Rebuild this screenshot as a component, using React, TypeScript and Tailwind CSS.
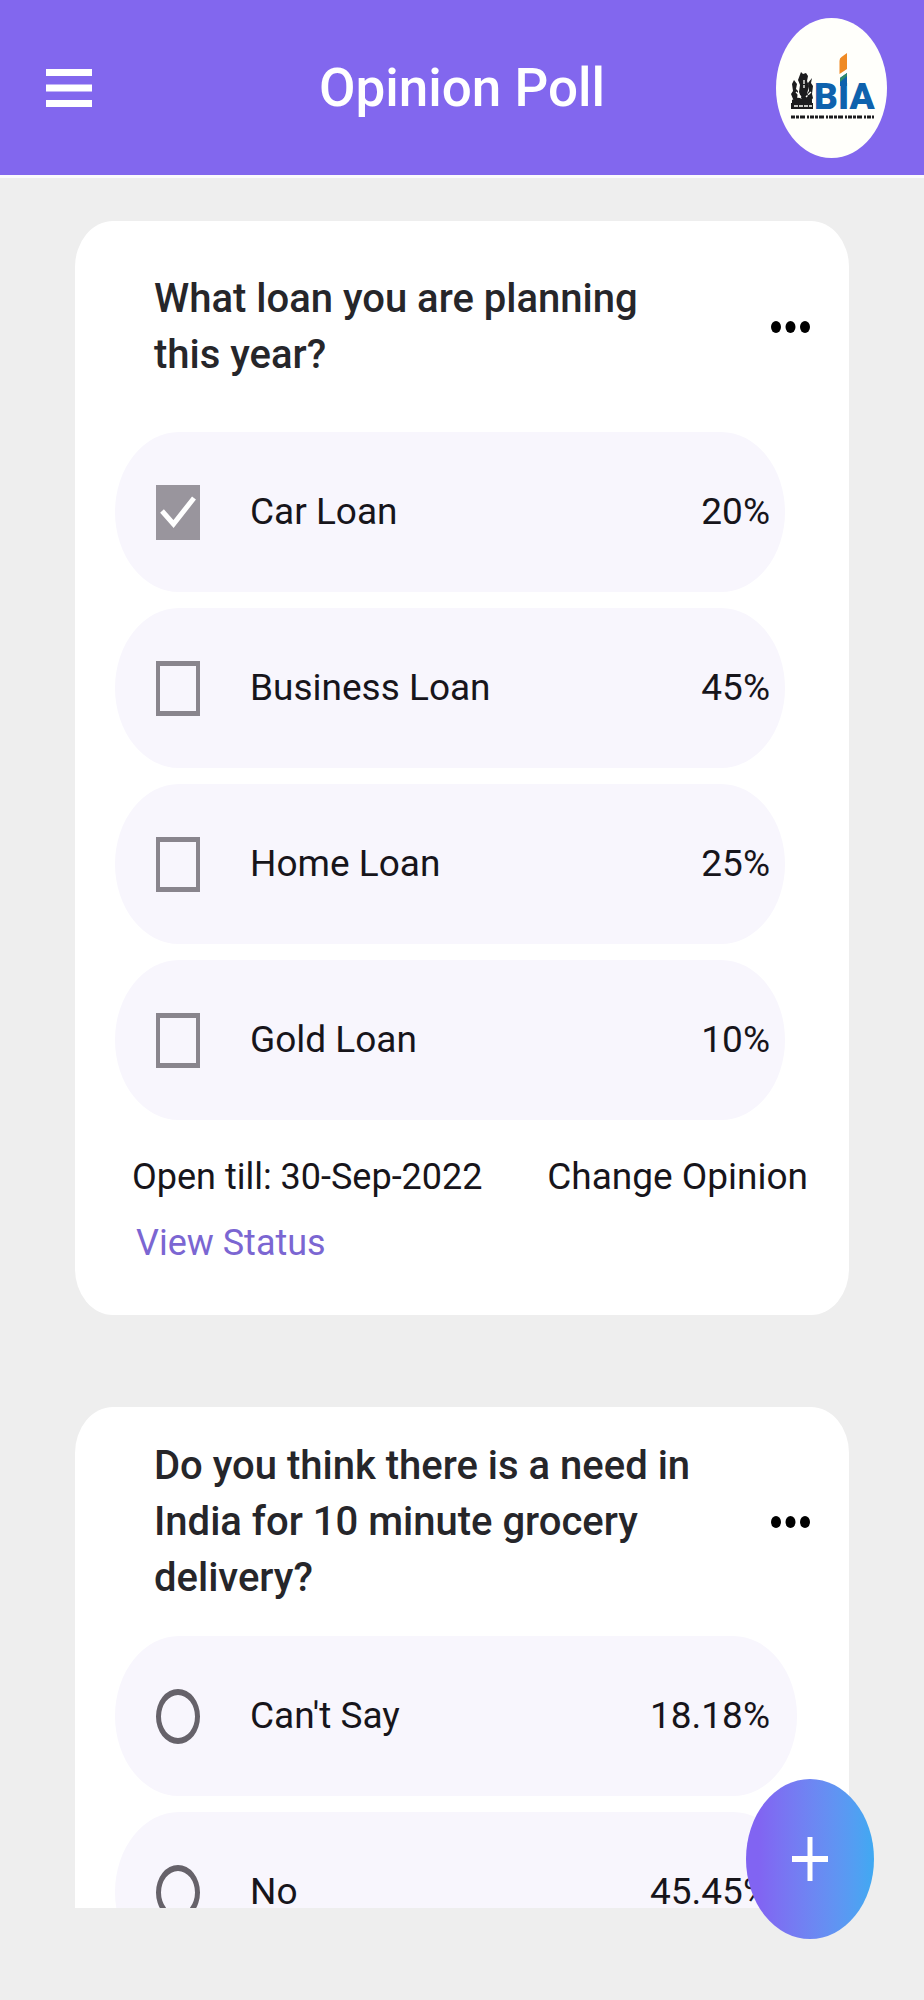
import { useState } from "react";

type PollOption = { label: string; share: string };

type Poll = {
  id: string;
  question: string;
  kind: "checkbox" | "radio";
  options: PollOption[];
};

const loanPoll: Poll = {
  id: "loan",
  question: "What loan you are planning this year?",
  kind: "checkbox",
  options: [
    { label: "Car Loan", share: "20%" },
    { label: "Business Loan", share: "45%" },
    { label: "Home Loan", share: "25%" },
    { label: "Gold Loan", share: "10%" },
  ],
};

const groceryPoll: Poll = {
  id: "grocery",
  question: "Do you think there is a need in India for 10 minute grocery delivery?",
  kind: "radio",
  options: [
    { label: "Can't Say", share: "18.18%" },
    { label: "No", share: "45.45%" },
  ],
};

function Logo() {
  return (
    <svg viewBox="0 0 111 140" className="h-[140px] w-[111px] shrink-0" role="img" aria-label="BIA">
      <ellipse cx="55.5" cy="70" rx="55.5" ry="70" fill="#fffffb" />
      <g fill="#1c1c1e">
        <path d="M15 85h22v6H15z" />
        <path d="M16 82q5-4 10-1q6-3 10 1v3H16z" />
        <path d="M18 62l3 4l-1 5l2 2l-1 8h-4l-2-5l2-3l-1-7z" />
        <path d="M25 54l2 2l3-1l2 3l-1 5l2 5l-2 8l2 6h-7l-3-8l1-7l-2-5z" />
        <path d="M36 60l-1 5l2 3l-1 8l1 4l-2 3h-3l-1-7l2-3l-1-8z" />
      </g>
      <path d="M20 74l5 5M35 74l-5 5M28 62v8M18 88h18" fill="none" stroke="#fffffb" strokeWidth="1.300" strokeDasharray="4 1" />
      <text x="38" y="91" fontFamily="Roboto, sans-serif" fontWeight="900" fontSize="37" fill="#0e62ad">
        BIA
      </text>
      <path d="M64 60l7-5v13h-7z" fill="#0e62ad" />
      <path d="M64 60l7-5v3l-7 6z" fill="#2f8a6a" />
      <path d="M63.500 56l7.500-5V35l-5.500 4q-2 1-2 4z" fill="#ef8a24" />
      <path d="M15 99h83" stroke="#1c1c1e" strokeWidth="3" strokeDasharray="4 1 3 1 5 2 2 1" />
    </svg>
  );
}

function OptionRow({ poll, option, checked, onToggle }: { poll: Poll; option: PollOption; checked: boolean; onToggle: () => void }) {
  const isBox = poll.kind === "checkbox";
  return (
    <label className="flex h-[160px] items-center rounded-[64px/80px] bg-[#f8f6fd] pr-[15px] pl-[41px]">
      <span className="grid shrink-0 place-items-center">
        <input
          type={poll.kind}
          name={poll.id}
          checked={checked}
          onChange={onToggle}
          className={
            isBox
              ? "col-start-1 row-start-1 h-[55px] w-[44px] appearance-none border-x-4 border-y-[5px] border-[#89858d] checked:border-[#99959d] checked:bg-[#99959d]"
              : "col-start-1 row-start-1 h-[55px] w-[44px] appearance-none rounded-[50%] border-x-[5px] border-y-[6px] border-[#66626a] checked:bg-[#66626a]"
          }
        />
        {isBox && checked && (
          <svg viewBox="0 0 44 55" className="pointer-events-none col-start-1 row-start-1 h-[55px] w-[44px]" aria-hidden="true">
            <path d="M6 26L17.500 39L38 13" fill="none" stroke="#fff" strokeWidth="5" />
          </svg>
        )}
      </span>
      <span className="ml-[50px] grow text-[37px] leading-[48px] text-[#17151b]">{option.label}</span>
      <span className="text-[37px] leading-[48px] text-[#17151b]">{option.share}</span>
    </label>
  );
}

function PollHeading({ question }: { question: string }) {
  return (
    <div className="flex items-center justify-between pr-[39px] pl-[79px]">
      <h2 className="max-w-[550px] text-[40px] leading-[56px] font-medium text-[#26262a]">{question}</h2>
      <button type="button" aria-label="Poll options" className="flex h-12 shrink-0 items-center">
        <svg viewBox="0 0 40 14" className="h-[14px] w-[40px]" aria-hidden="true">
          <ellipse cx="6" cy="7" rx="5" ry="6" />
          <ellipse cx="20.500" cy="7" rx="5" ry="6" />
          <ellipse cx="35" cy="7" rx="5" ry="6" />
        </svg>
      </button>
    </div>
  );
}

export default function App() {
  const [loans, setLoans] = useState<string[]>(["Car Loan"]);
  const [answer, setAnswer] = useState("");

  const toggleLoan = (label: string) =>
    setLoans((prev) => (prev.includes(label) ? prev.filter((l) => l !== label) : [...prev, label]));

  return (
    <div className="relative flex h-screen flex-col bg-[#eeeeee] pb-[92px] font-['Roboto',sans-serif]">
      <header className="grid h-[178px] shrink-0 grid-cols-[1fr_auto_1fr] items-center border-b-[3px] border-[#fbfafd] bg-[#8267ee] px-[37px]">
        <button type="button" aria-label="Open menu" className="ml-[9px] w-[46px]">
          <svg viewBox="0 0 46 40" className="h-[40px] w-[46px]" aria-hidden="true">
            <path d="M0 4.500h46M0 20h46M0 35.500h46" stroke="#fff" strokeWidth="7" />
          </svg>
        </button>
        <h1 className="text-[53px] leading-[64px] font-medium text-white">Opinion Poll</h1>
        <div className="flex justify-end">
          <Logo />
        </div>
      </header>

      <main className="flex min-h-0 grow flex-col gap-[92px] overflow-y-auto px-[75px] pt-[43px] [scrollbar-width:none]">
        <section className="shrink-0 rounded-[38px/46px] bg-white pt-[50px] pb-[46px]">
          <PollHeading question={loanPoll.question} />
          <div className="mt-[49px] mr-[64px] ml-[40px] flex flex-col gap-4">
            {loanPoll.options.map((o) => (
              <OptionRow key={o.label} poll={loanPoll} option={o} checked={loans.includes(o.label)} onToggle={() => toggleLoan(o.label)} />
            ))}
          </div>
          <div className="mt-[31px] flex items-center justify-between pr-[41px] pl-[57px] text-[36px] leading-[52px] text-[#17151b]">
            <p>Open till: 30-Sep-2022</p>
            <button type="button" className="text-[37px]">
              Change Opinion
            </button>
          </div>
          <a href="#status" className="mt-[14px] ml-[61px] block w-fit text-[36px] leading-[52px] text-[#7b66d2]">
            View Status
          </a>
        </section>

        <section className="shrink-0 rounded-[38px/46px] bg-white pt-[31px] pb-[34px]">
          <PollHeading question={groceryPoll.question} />
          <div className="mt-[30px] mr-[52px] ml-[40px] flex flex-col gap-4 *:pr-[27px]">
            {groceryPoll.options.map((o) => (
              <OptionRow key={o.label} poll={groceryPoll} option={o} checked={answer === o.label} onToggle={() => setAnswer(o.label)} />
            ))}
          </div>
        </section>
      </main>

      <button
        type="button"
        aria-label="Add poll"
        className="absolute right-[50px] bottom-[61px] grid h-[160px] w-[128px] place-items-center rounded-[50%] bg-linear-to-r from-[#8164f2] from-10% to-[#3fa9f2]"
      >
        <svg viewBox="0 0 36 44" className="h-[44px] w-[36px]" aria-hidden="true">
          <path d="M0 22h36" stroke="#fff" strokeWidth="6" />
          <path d="M18 0v44" stroke="#fff" strokeWidth="5" />
        </svg>
      </button>
    </div>
  );
}
